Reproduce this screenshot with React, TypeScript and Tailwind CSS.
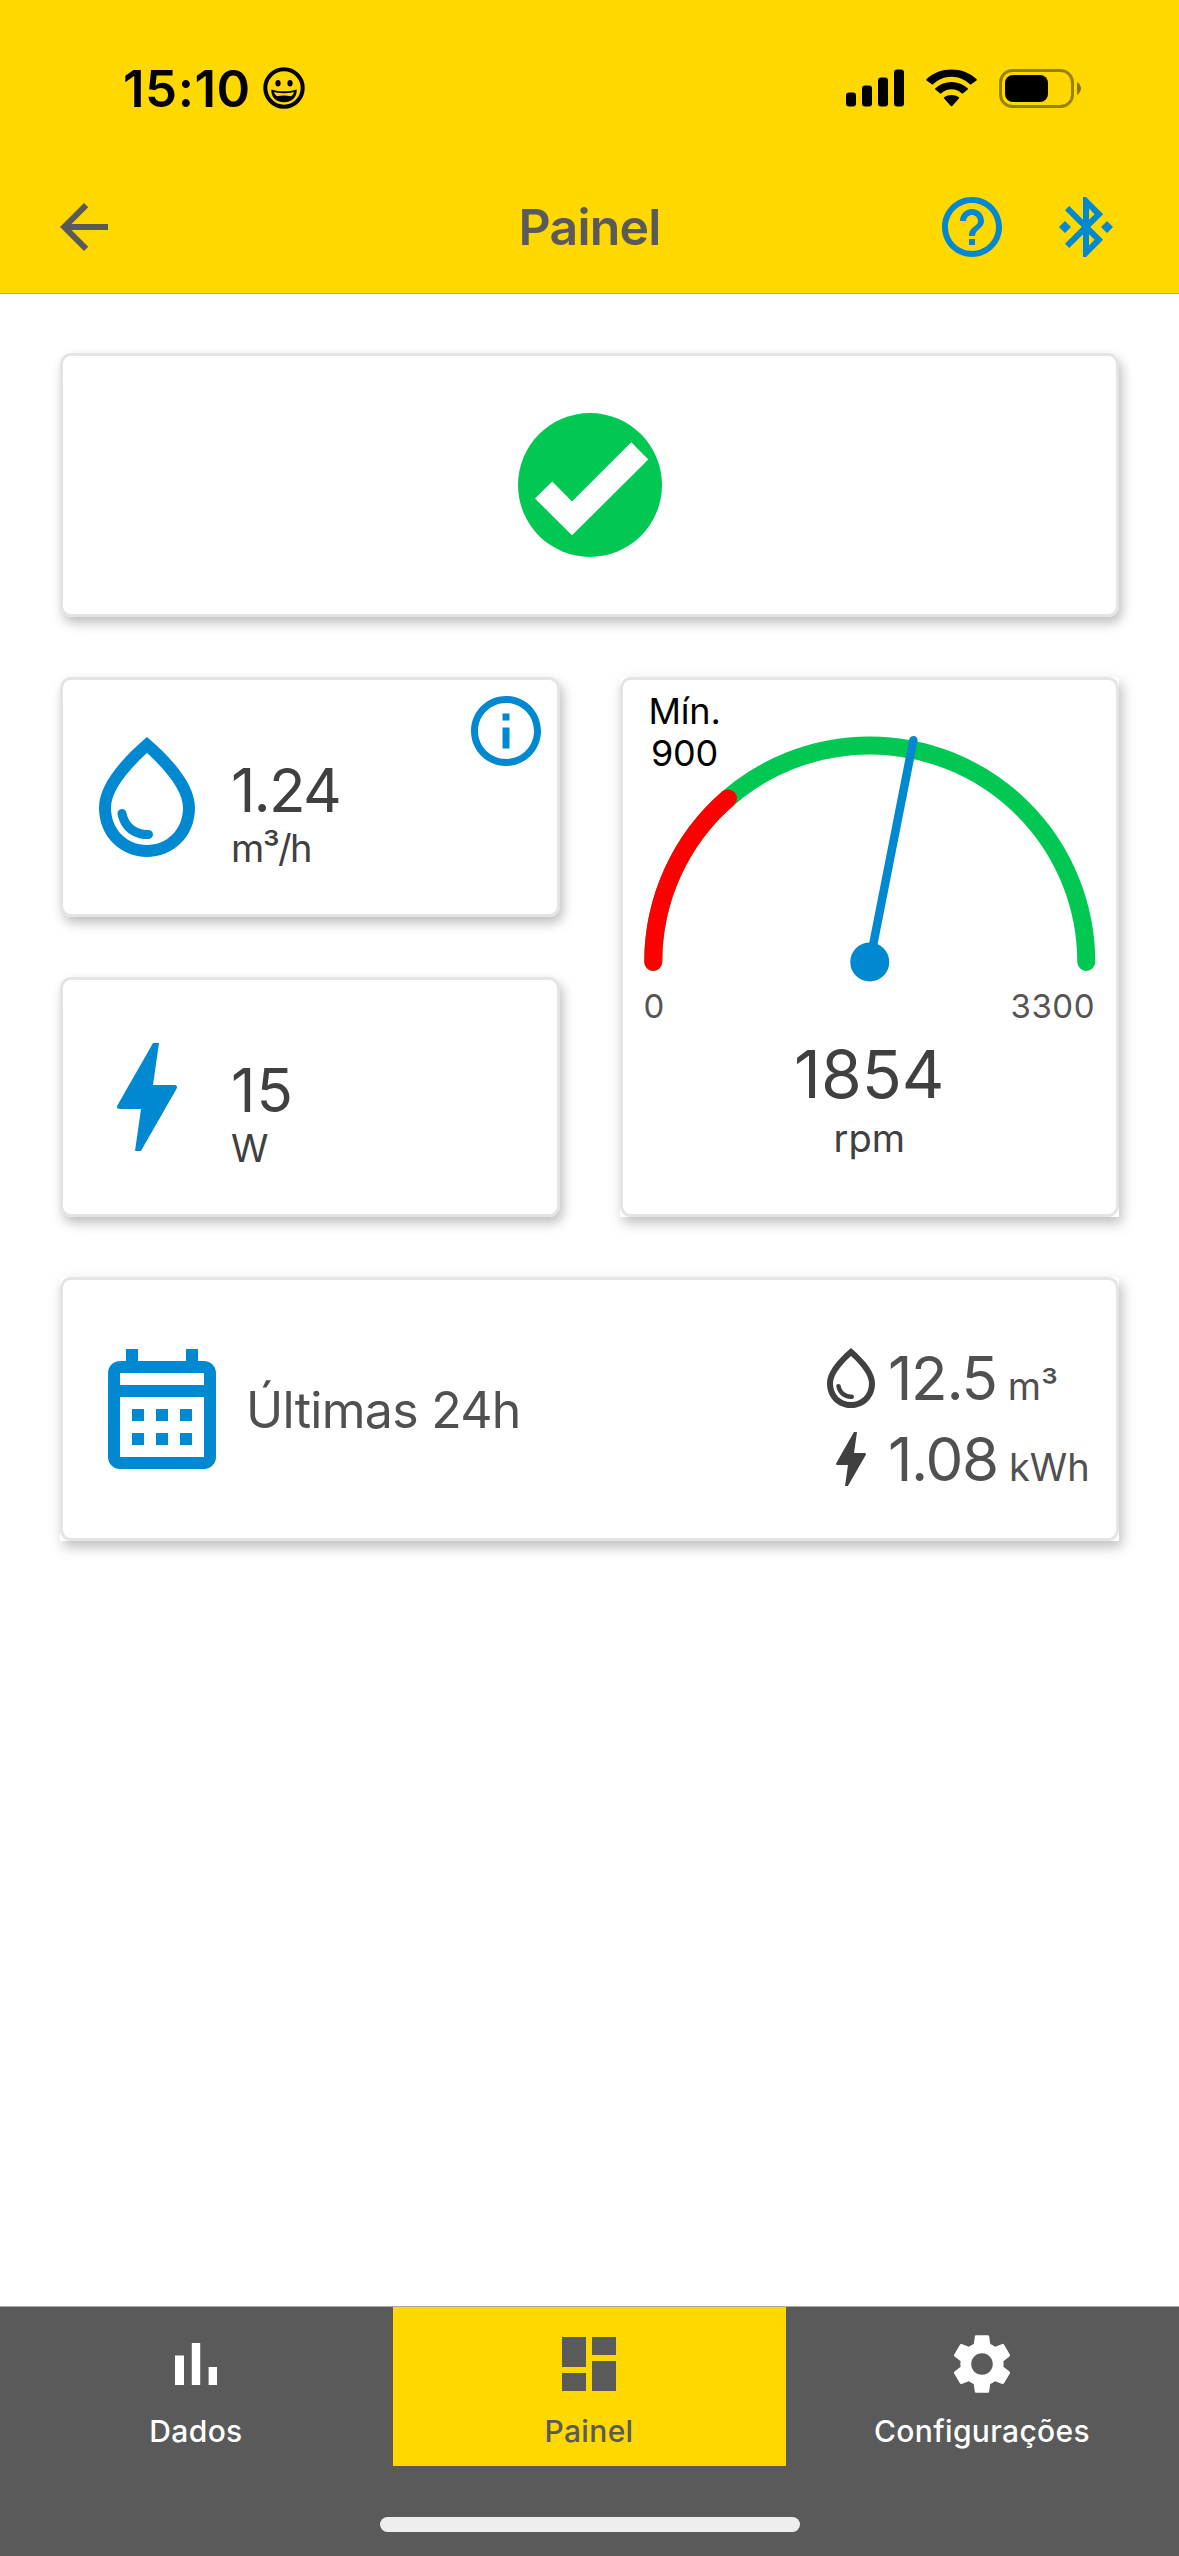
import React from "react";
import {
  MdArrowBack,
  MdBluetoothConnected,
  MdBolt,
  MdDashboard,
  MdHelpOutline,
  MdInfoOutline,
  MdOutlineCalendarMonth,
  MdOutlineWaterDrop,
  MdSettings,
} from "react-icons/md";

const RPM = 1854;
const RPM_MIN = 900;
const RPM_MAX = 3300;

// Gauge geometry, in svg units
const CX = 246.5;
const CY = 282;
const RADIUS = 216.5;

function pointAt(value: number, radius: number) {
  const angle = Math.PI * (1 - value / RPM_MAX);
  return {
    x: CX + radius * Math.cos(angle),
    y: CY - radius * Math.sin(angle),
  };
}

function arc(from: number, to: number) {
  const a = pointAt(from, RADIUS);
  const b = pointAt(to, RADIUS);
  return `M${a.x} ${a.y}A${RADIUS} ${RADIUS} 0 0 1 ${b.x} ${b.y}`;
}

function StatusBar() {
  return (
    <div className="h-[176px] pl-[123px] pr-[98px] flex items-center justify-between text-black">
      <div className="flex items-center gap-[12px]">
        <span className="text-[51px] leading-none font-semibold tracking-[0.5px]">
          15:10
        </span>
        <svg className="w-[42px] h-[42px]" viewBox="0 0 42 42" fill="none">
          <circle cx="21" cy="21" r="18.7" stroke="currentColor" strokeWidth="4" />
          <ellipse cx="15" cy="16.3" rx="2.6" ry="3.3" fill="currentColor" />
          <ellipse cx="27" cy="16.3" rx="2.6" ry="3.3" fill="currentColor" />
          <path
            d="M8.3 22.4C16 25 26 25 33.7 22.4C34 30 29 35.2 21 35.2S8 30 8.3 22.4Z"
            fill="currentColor"
          />
          <path
            d="M11 25C17.5 26.6 24.5 26.6 31 25C30.2 27.6 29 29 27.8 29.2C23.5 28.4 18.5 28.4 14.2 29.2C12.6 28.4 11.6 27.2 11 25Z"
            fill="#ffd800"
          />
        </svg>
      </div>

      <div className="flex items-center">
        <svg className="w-[58px] h-[38px]" viewBox="0 0 58 38" fill="currentColor">
          <rect x="0" y="23.5" width="10" height="14" rx="3" />
          <rect x="16" y="16.5" width="10" height="21" rx="3" />
          <rect x="32" y="8.5" width="10" height="29" rx="3" />
          <rect x="48" y="0.5" width="10" height="37" rx="3" />
        </svg>
        <svg
          className="ml-[22px] w-[51px] h-[38px]"
          viewBox="0 0 51 38"
          fill="currentColor"
        >
          <path d="M25.5 7.8C32.4 7.8 38.9 10.5 43.8 15.3C44.2 15.7 44.8 15.7 45.2 15.3L50.5 11.4C50.9 11 50.9 10.3 50.4 9.9C36.6 -2.6 14.4 -2.6 .6 9.9C.1 10.3 .1 11 .5 11.4L5.8 15.3C6.2 15.7 6.8 15.7 7.2 15.3C12.1 10.5 18.6 7.8 25.5 7.8Z" />
          <path d="M25.5 20.3C29.3 20.3 32.9 21.7 35.6 24.3C36 24.7 36.7 24.7 37.1 24.3L41.7 20.6C42.1 20.2 42.1 19.6 41.6 19.2C32.5 11 18.5 11 9.4 19.2C8.9 19.6 8.9 20.2 9.3 20.6L13.9 24.3C14.3 24.7 15 24.7 15.4 24.3C18.1 21.7 21.7 20.3 25.5 20.3Z" />
          <path d="M32.9 29.6C33.3 29.2 33.3 28.6 32.8 28.3C28.6 25.1 22.4 25.1 18.2 28.3C17.7 28.6 17.7 29.2 18.1 29.6L24.8 37C25.2 37.4 25.8 37.4 26.2 37Z" />
        </svg>
        <svg
          className="ml-[22px] w-[82px] h-[39px]"
          viewBox="0 0 82 39"
          fill="currentColor"
        >
          <rect
            x="1.5"
            y="1.5"
            width="72"
            height="36"
            rx="12"
            fill="none"
            stroke="currentColor"
            strokeWidth="3"
            opacity="0.4"
          />
          <rect x="6" y="6" width="43" height="27" rx="8" />
          <path d="M78 13C80.6 14.6 82 17 82 19.5S80.6 24.4 78 26Z" opacity="0.45" />
        </svg>
      </div>
    </div>
  );
}

function Header() {
  return (
    <header className="h-[294px] bg-[#ffd800] border-b border-[#bfb06a]">
      <StatusBar />
      <div className="h-[102px] pl-12 pr-[57px] grid grid-cols-[1fr_auto_1fr] items-center">
        <button className="justify-self-start">
          <MdArrowBack className="w-[72px] h-[72px] text-[#5a5a5a]" />
        </button>
        <h1 className="pl-[9px] text-[50px] leading-none font-semibold tracking-[-0.8px] text-[#5a5a5a]">
          Painel
        </h1>
        <div className="justify-self-end flex items-center gap-[42px] text-[#0088d1]">
          <MdHelpOutline className="w-[72px] h-[72px]" />
          <MdBluetoothConnected className="w-[72px] h-[72px]" />
        </div>
      </div>
    </header>
  );
}

interface CardProps {
  className: string;
  square?: boolean;
  children: React.ReactNode;
}

function Card({ className, square, children }: CardProps) {
  return (
    <div
      className={`bg-white shadow-[3px_6px_12px_rgba(0,0,0,0.26)] ${square ? "" : "rounded-[11px]"}`}
    >
      <div
        className={`relative rounded-[11px] border-[3px] border-[#e4e4e4] ${className}`}
      >
        {children}
      </div>
    </div>
  );
}

interface MetricProps {
  icon: React.ReactNode;
  value: string;
  unit: string;
  valueClass: string;
}

function Metric({ icon, value, unit, valueClass }: MetricProps) {
  return (
    <>
      {icon}
      <div className="mt-[31px] ml-[12px] text-[#404040]">
        <p className={`text-[60px] leading-[72px] ${valueClass}`}>{value}</p>
        <p className="text-[38px] leading-[45px] tracking-[-1.6px]">{unit}</p>
      </div>
    </>
  );
}

function Gauge() {
  const tip = pointAt(RPM, 226);

  return (
    <Card square className="h-[540px] text-[#404040]">
      <svg className="block w-full h-[306px]" viewBox="0 0 493 306" fill="none">
        <g strokeWidth="18" strokeLinecap="round">
          <path d={arc(0, RPM_MAX)} stroke="#00c853" />
          <path d={arc(0, RPM_MIN)} stroke="#ff0000" />
        </g>
        <line
          x1={CX}
          y1={CY}
          x2={tip.x}
          y2={tip.y}
          stroke="#0088d1"
          strokeWidth="8.5"
          strokeLinecap="round"
        />
        <circle cx={CX} cy={CY} r="19.5" fill="#0088d1" />
      </svg>
      <p className="absolute left-[26px] top-[10px] text-center text-[36px] leading-[42px] tracking-[-0.2px] text-black">
        Mín.
        <br />
        900
      </p>
      <div className="px-[21px] flex justify-between text-[33px] leading-[40px] tracking-[0.5px] text-[#555]">
        <span>0</span>
        <span>{RPM_MAX}</span>
      </div>
      <p className="mt-[8px] text-center text-[66px] leading-[80px]">{RPM}</p>
      <p className="text-center text-[38px] leading-[48px]">rpm</p>
    </Card>
  );
}

interface TotalProps {
  icon: React.ReactNode;
  value: string;
  unit: string;
}

function Total({ icon, value, unit }: TotalProps) {
  return (
    <div className="h-[81px] flex items-center">
      {icon}
      <p className="pl-[1px] flex items-baseline text-[#505050]">
        <span className="text-[60px] leading-[72px] tracking-[-1.3px]">
          {value}
        </span>
        <span className="ml-[11px] text-[38px] leading-none">{unit}</span>
      </p>
    </div>
  );
}

interface TabProps {
  icon: React.ReactNode;
  label: string;
  active?: boolean;
}

function Tab({ icon, label, active }: TabProps) {
  return (
    <button
      className={`h-[159px] pt-[21px] pr-[1px] flex flex-col items-center ${active ? "bg-[#ffd800] text-[#5a5a5a]" : "text-white"}`}
    >
      {icon}
      <span className="mt-[12px] text-[30px] leading-[38px] font-medium tracking-[0.35px]">
        {label}
      </span>
    </button>
  );
}

function BarsIcon() {
  return (
    <svg className="w-[72px] h-[72px]" viewBox="0 0 24 24" fill="currentColor">
      <path d="M5 9.2h3V19H5zM10.6 5h2.8v14h-2.8zM16.2 13H19v6h-2.8z" />
    </svg>
  );
}

export default function App() {
  return (
    <div className="w-[1179px] h-[2556px] flex flex-col bg-white font-['Inter','Liberation_Sans',sans-serif]">
      <Header />

      <main className="flex-1 px-[60px] pt-[59px] flex flex-col gap-[60px]">
        <Card className="h-[264px] flex items-center justify-center">
          <svg className="w-[144px] h-[144px]" viewBox="0 0 144 144">
            <circle cx="72" cy="72" r="72" fill="#00c853" />
            <path
              d="M17 85.5L34.3 68.5L54 88.5L113.3 29.3L130.3 46.5L54 122.3Z"
              fill="#fff"
            />
          </svg>
        </Card>

        <div className="grid grid-cols-2 gap-[60px]">
          <div className="flex flex-col gap-[60px]">
            <Card className="h-[240px] pl-[12px] flex items-center">
              <Metric
                icon={
                  <MdOutlineWaterDrop className="w-[144px] h-[144px] text-[#0088d1]" />
                }
                value="1.24"
                unit="m³/h"
                valueClass="tracking-[-1.8px]"
              />
              <MdInfoOutline className="absolute top-[9px] right-[9px] w-[84px] h-[84px] text-[#0088d1]" />
            </Card>
            <Card className="h-[240px] pl-[12px] flex items-center">
              <Metric
                icon={<MdBolt className="w-[144px] h-[144px] text-[#0088d1]" />}
                value="15"
                unit="W"
                valueClass="tracking-[1px]"
              />
            </Card>
          </div>
          <Gauge />
        </div>

        <Card square className="h-[264px] pl-[27px] flex items-center">
          <MdOutlineCalendarMonth className="w-[144px] h-[144px] text-[#0088d1]" />
          <p className="mt-[2px] ml-[12px] flex-1 text-[50px] leading-none tracking-[-0.7px] text-[#505050]">
            Últimas 24h
          </p>
          <div className="mt-[19px] w-[301px] text-[#404040]">
            <Total
              icon={<MdOutlineWaterDrop className="w-[72px] h-[72px]" />}
              value="12.5"
              unit="m³"
            />
            <Total
              icon={<MdBolt className="w-[72px] h-[72px]" />}
              value="1.08"
              unit="kWh"
            />
          </div>
        </Card>
      </main>

      <nav className="h-[250px] bg-[#5a5a5a] border-t border-[#a8a8a8]">
        <div className="grid grid-cols-3">
          <Tab icon={<BarsIcon />} label="Dados" />
          <Tab
            active
            icon={<MdDashboard className="w-[72px] h-[72px]" />}
            label="Painel"
          />
          <Tab
            icon={<MdSettings className="w-[72px] h-[72px]" />}
            label="Configurações"
          />
        </div>
        <div className="mt-[51px] mx-auto w-[420px] h-[15px] rounded-full bg-[#eee]" />
      </nav>
    </div>
  );
}
